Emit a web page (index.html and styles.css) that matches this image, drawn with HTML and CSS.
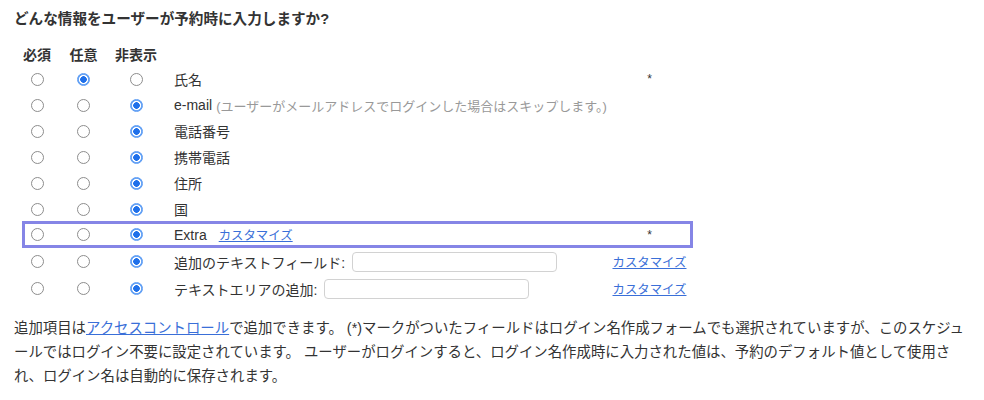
FILE: index.html
```html
<!DOCTYPE html>
<html lang="ja">
<head>
<meta charset="utf-8">
<link rel="stylesheet" href="styles.css">
</head>
<body>
<div class="page">
  <h2 class="title">どんな情報をユーザーが予約時に入力しますか?</h2>
  <div class="fields">
    <div class="row head">
      <span class="c">必須</span><span class="c">任意</span><span class="c">非表示</span><span></span><span></span>
    </div>
    <div class="row">
      <span class="c"><input type="radio" name="r1" class="rd"></span>
      <span class="c"><input type="radio" name="r1" class="rd" checked></span>
      <span class="c"><input type="radio" name="r1" class="rd"></span>
      <span class="lbl">氏名</span>
      <span class="c ast">*</span>
    </div>
    <div class="row">
      <span class="c"><input type="radio" name="r2" class="rd"></span>
      <span class="c"><input type="radio" name="r2" class="rd"></span>
      <span class="c"><input type="radio" name="r2" class="rd" checked></span>
      <span class="lbl">e-mail <span class="note">(ユーザーがメールアドレスでログインした場合はスキップします。)</span></span>
      <span></span>
    </div>
    <div class="row">
      <span class="c"><input type="radio" name="r3" class="rd"></span>
      <span class="c"><input type="radio" name="r3" class="rd"></span>
      <span class="c"><input type="radio" name="r3" class="rd" checked></span>
      <span class="lbl">電話番号</span>
      <span></span>
    </div>
    <div class="row">
      <span class="c"><input type="radio" name="r4" class="rd"></span>
      <span class="c"><input type="radio" name="r4" class="rd"></span>
      <span class="c"><input type="radio" name="r4" class="rd" checked></span>
      <span class="lbl">携帯電話</span>
      <span></span>
    </div>
    <div class="row">
      <span class="c"><input type="radio" name="r5" class="rd"></span>
      <span class="c"><input type="radio" name="r5" class="rd"></span>
      <span class="c"><input type="radio" name="r5" class="rd" checked></span>
      <span class="lbl">住所</span>
      <span></span>
    </div>
    <div class="row">
      <span class="c"><input type="radio" name="r6" class="rd"></span>
      <span class="c"><input type="radio" name="r6" class="rd"></span>
      <span class="c"><input type="radio" name="r6" class="rd" checked></span>
      <span class="lbl">国</span>
      <span></span>
    </div>
    <div class="row hl">
      <span class="c"><input type="radio" name="r7" class="rd"></span>
      <span class="c"><input type="radio" name="r7" class="rd"></span>
      <span class="c"><input type="radio" name="r7" class="rd" checked></span>
      <span class="lbl">Extra <a href="#" class="link sm ml">カスタマイズ</a></span>
      <span class="c ast">*</span>
    </div>
    <div class="row tall">
      <span class="c"><input type="radio" name="r8" class="rd"></span>
      <span class="c"><input type="radio" name="r8" class="rd"></span>
      <span class="c"><input type="radio" name="r8" class="rd" checked></span>
      <span class="lbl">追加のテキストフィールド: <input type="text" class="txt"></span>
      <span class="c"><a href="#" class="link sm">カスタマイズ</a></span>
    </div>
    <div class="row tall">
      <span class="c"><input type="radio" name="r9" class="rd"></span>
      <span class="c"><input type="radio" name="r9" class="rd"></span>
      <span class="c"><input type="radio" name="r9" class="rd" checked></span>
      <span class="lbl">テキストエリアの追加: <input type="text" class="txt"></span>
      <span class="c"><a href="#" class="link sm">カスタマイズ</a></span>
    </div>
  </div>
  <p class="info">追加項目は<a href="#" class="link">アクセスコントロール</a>で追加できます。 (*)マークがついたフィールドはログイン名作成フォームでも選択されていますが、このスケジュールではログイン不要に設定されています。 ユーザーがログインすると、ログイン名作成時に入力された値は、予約のデフォルト値として使用され、ログイン名は自動的に保存されます。</p>
</div>
</body>
</html>
```
FILE: styles.css
```css
html, body {
  margin: 0;
  background: #fff;
}
body {
  font-family: "Liberation Sans", "Noto Sans CJK JP", sans-serif;
  color: #333;
  font-size: 14px;
}
.page {
  padding: 9px 19px 0 14px;
}
.title {
  margin: 0;
  font-size: 14.6px;
  line-height: 20px;
  font-weight: bold;
  color: #333;
}
.fields {
  margin: 12px 0 0 8px;
  width: 671px;
}
.row {
  display: grid;
  grid-template-columns: 30px 29px 42px 421px 75px;
  column-gap: 17px;
  padding-right: 6px;
  height: 26px;
  align-items: center;
}
.row.head {
  height: 25px;
  font-weight: bold;
}
.row.tall {
  height: 27px;
}
.row.hl {
  outline: 3px solid #8585e6;
  outline-offset: -3px;
  margin-top: -1px;
  height: 27px;
}
.c {
  text-align: center;
  white-space: nowrap;
  display: flex;
  justify-content: center;
  align-items: center;
}
.lbl {
  white-space: nowrap;
  display: flex;
  align-items: center;
}
.note {
  color: #999;
  margin-left: 4px;
  font-size: 13px;
}
.ast {
  font-size: 12px;
}
.rd {
  appearance: none;
  -webkit-appearance: none;
  width: 13px;
  height: 13px;
  margin: 0;
  border: 1px solid #8d8d8d;
  border-radius: 50%;
  background: #fff;
  box-sizing: border-box;
}
.rd:checked {
  border: 1px solid #5b9cf4;
  background: radial-gradient(circle, #1f70ea 0 3px, #fff 3.6px 4.3px, #6aa5f6 4.8px);
}
.link {
  color: #3a6fd8;
  text-decoration: underline;
}
.sm {
  font-size: 12.4px;
}
.ml {
  margin-left: 12px;
}
.txt {
  width: 205px;
  height: 20px;
  box-sizing: border-box;
  border: 1px solid #d2d2d2;
  border-radius: 4px;
  margin: 0 0 0 7px;
  padding: 0 4px;
  background: #fff;
}
.info {
  margin: 14px 0 0 0;
  line-height: 24px;
  font-size: 14.4px;
}
```
